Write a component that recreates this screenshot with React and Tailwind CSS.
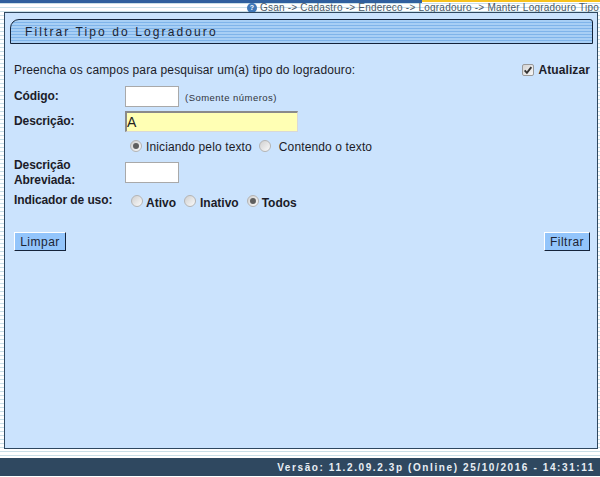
const Radio = ({ on }) => (
  <span className="w-[12px] h-[12px] rounded-full border border-[#b4b4b4] bg-gradient-to-br from-[#d0d0d0] to-[#fafafa] flex items-center justify-center shrink-0">
    {on && <span className="w-[6px] h-[6px] rounded-full bg-[#5f5f5f]" />}
  </span>
);

const Label = ({ children, className = "" }) => (
  <div className={`w-[111px] shrink-0 font-bold text-[12px] leading-[15px] tracking-[-0.1px] text-[#1c1c28] ${className}`}>{children}</div>
);

const TextBox = ({ className = "" }) => (
  <div className={`h-[21px] border border-[#a9a9a9] bg-white ${className}`} />
);

export default function App() {
  return (
    <div className="w-[600px] h-[477px] flex flex-col overflow-hidden font-['Liberation_Sans',Arial,sans-serif] bg-[repeating-linear-gradient(180deg,#ffffff_0px,#ffffff_3px,#c9dfe8_3px,#c9dfe8_4px)]">
      {/* top strip */}
      <div className="h-[3px] flex shrink-0">
        <div className="w-[422px] bg-[#2f5f9e]" />
        <div className="flex-1 h-[2px] bg-[#f7c21e]" />
      </div>

      {/* breadcrumb */}
      <div className="h-[9px] flex items-center justify-end gap-[3px] pr-[1px] text-[10px] leading-[9px] tracking-[0.22px] text-[#4a5a68] whitespace-nowrap">
        <span className="w-[10px] h-[10px] rounded-full bg-[#3f78b8] text-white text-[7px] leading-[10px] text-center font-bold tracking-normal">?</span>
        <span>Gsan -&gt; Cadastro -&gt; Endereco -&gt; Logradouro -&gt; Manter Logradouro Tipo</span>
      </div>

      {/* panel */}
      <div className="mx-[4px] w-[594px] h-[437px] border border-[#2f4860] bg-[#cbe3fd] px-[5px] pt-[6px] shrink-0">
        <div className="w-[583px] h-[25px] border border-[#14233a] rounded-tl-[9px] rounded-tr-[3px] flex items-center pl-[14px] text-[12px] tracking-[2.1px] text-[#1c2433] bg-[repeating-linear-gradient(180deg,#a8cff5_0px,#a8cff5_2px,#7fb4ea_2px,#7fb4ea_3px)]">
          Filtrar Tipo do Logradouro
        </div>

        <div className="pl-[4px] pr-[2px]">
          <div className="mt-[16px] h-[20px] flex items-center justify-between">
            <span className="text-[12px] tracking-[0.13px] text-[#1c1c28]">Preencha os campos para pesquisar um(a) tipo do logradouro:</span>
            <span className="flex items-center gap-[4px] font-bold text-[12px] tracking-[0.1px] text-[#1c1c28]">
              <span className="w-[12px] h-[12px] border border-[#9a9a9a] rounded-[2px] bg-gradient-to-br from-[#d4d4d4] to-[#f6f6f6] flex items-center justify-center">
                <svg viewBox="0 0 12 12" className="w-[10px] h-[10px]"><path d="M2 6.5 L4.7 9.5 L10 2.5" fill="none" stroke="#333" strokeWidth="2.2" /></svg>
              </span>
              Atualizar
            </span>
          </div>

          <div className="mt-[6px] flex items-center h-[21px]">
            <Label className="-mt-[1px]">Código:</Label>
            <TextBox className="w-[54px]" />
            <span className="ml-[6px] mt-[3px] text-[9.5px] tracking-[0.47px] text-[#30343c]">(Somente números)</span>
          </div>

          <div className="mt-[4px] flex items-center h-[21px]">
            <Label className="-mt-[1px]">Descrição:</Label>
            <div className="w-[173px] h-[21px] border-t-2 border-l-2 border-r border-b border-t-[#8a8a8a] border-l-[#8a8a8a] border-r-[#d8d8d8] border-b-[#d8d8d8] bg-[#ffffb4] text-[14px] leading-[19px] text-[#222]">A</div>
          </div>

          <div className="mt-[6px] h-[16px] flex items-center pl-[116px] text-[12px] tracking-[0.12px] text-[#1c1c28]">
            <Radio on />
            <span className="ml-[4px] mt-[2px]">Iniciando pelo texto</span>
            <span className="ml-[7px]"><Radio /></span>
            <span className="ml-[8px] mt-[2px]">Contendo o texto</span>
          </div>

          <div className="mt-[8px] flex items-start h-[21px]">
            <Label className="-mt-[4px]">Descrição<br />Abreviada:</Label>
            <TextBox className="w-[54px]" />
          </div>

          <div className="mt-[9px] flex items-center h-[18px]">
            <Label className="-mt-[1px]">Indicador de uso:</Label>
            <div className="pl-[6px] flex items-center font-bold text-[12px] text-[#1c1c28]">
              <Radio />
              <span className="ml-[3px] mt-[3px]">Ativo</span>
              <span className="ml-[8px]"><Radio /></span>
              <span className="ml-[4px] mt-[3px]">Inativo</span>
              <span className="ml-[8px]"><Radio on /></span>
              <span className="ml-[3px] mt-[3px]">Todos</span>
            </div>
          </div>

          <div className="mt-[22px] flex justify-between">
            <button className="h-[19px] w-[52px] border border-t-white border-l-white border-r-[#14233a] border-b-[#14233a] bg-[#93c5fb] text-[12px] tracking-[0.5px] text-[#1c2433]">Limpar</button>
            <button className="h-[19px] w-[46px] border border-t-white border-l-white border-r-[#14233a] border-b-[#14233a] bg-[#93c5fb] text-[12px] tracking-[0.5px] text-[#1c2433]">Filtrar</button>
          </div>
        </div>
      </div>

      {/* footer */}
      <div className="mt-[9px] h-[18px] bg-[#2f4860] flex items-center justify-end pr-[5px] text-[10px] font-bold tracking-[1.6px] text-[#e8eef4] shrink-0">
        Versão: 11.2.09.2.3p (Online) 25/10/2016 - 14:31:11
      </div>
    </div>
  );
}
